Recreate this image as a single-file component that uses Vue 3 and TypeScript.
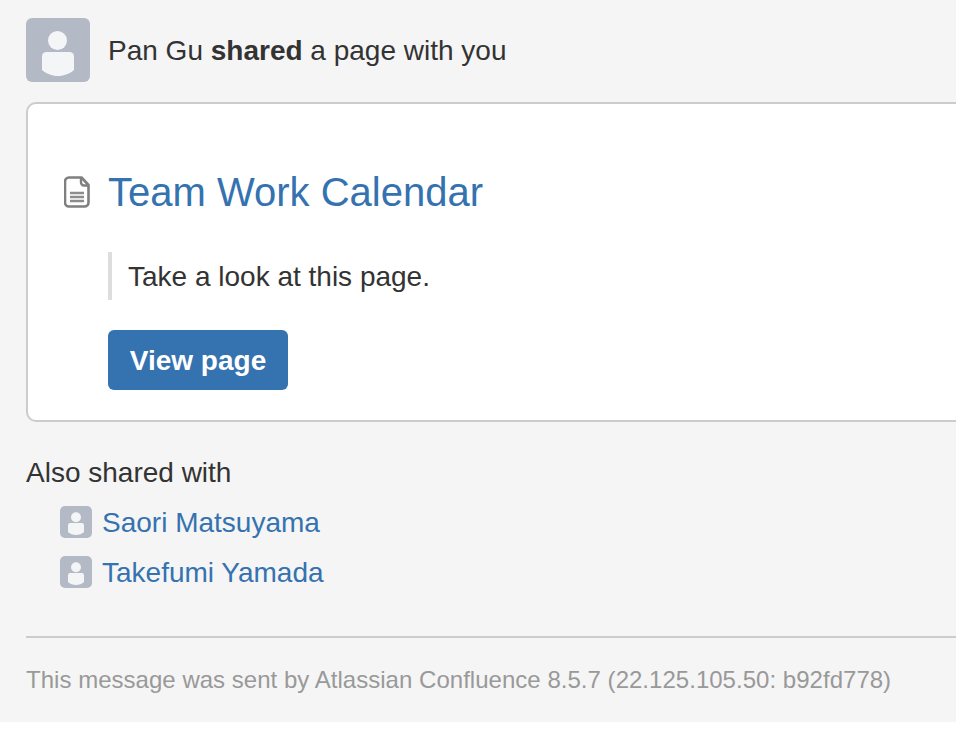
<script setup lang="ts">
const people: string[] = ['Saori Matsuyama', 'Takefumi Yamada']
</script>

<template>
  <div class="viewport">
    <main class="page">
      <header class="head">
        <svg class="avatar" viewBox="0 0 64 64" aria-hidden="true">
          <rect width="64" height="64" rx="6" fill="#b3bac5" />
          <circle cx="31.500" cy="22.500" r="9.500" fill="#f4f5f7" />
          <path d="M16 38.500a4.500 4.500 0 0 1 4.500-4.500h23a4.500 4.500 0 0 1 4.500 4.500v13.500c-4 3.500-10 6-16 6s-12-2.500-16-6z" fill="#f4f5f7" />
        </svg>
        <p class="head-text">Pan Gu <strong>shared</strong> a page with you</p>
      </header>

      <section class="card">
        <div class="title-row">
          <svg class="page-icon" viewBox="0 0 26 32" aria-hidden="true">
            <path d="M5 1.500h12.500l7 7.500V26.500a4 4 0 0 1-4 4H5a4 4 0 0 1-4-4V5.500a4 4 0 0 1 4-4z" fill="#fff" stroke="#7f7f7f" stroke-width="2.600" stroke-linejoin="round" />
            <path d="M17 2v4.500a3 3 0 0 0 3 3h4.500" fill="none" stroke="#7f7f7f" stroke-width="2.400" />
            <path d="M6 17h14M6 21h14M6 25h14" stroke="#8c8c8c" stroke-width="2.400" />
          </svg>
          <a class="title">Team Work Calendar</a>
        </div>
        <blockquote class="quote">Take a look at this page.</blockquote>
        <a class="button">View page</a>
      </section>

      <p class="also">Also shared with</p>
      <ul class="people">
        <li v-for="person in people" :key="person" class="person">
          <svg class="mini" viewBox="0 0 64 64" aria-hidden="true">
            <rect width="64" height="64" rx="10" fill="#b3bac5" />
            <circle cx="32" cy="22.500" r="10" fill="#f4f5f7" />
            <path d="M16 38.500a4.500 4.500 0 0 1 4.500-4.500h23a4.500 4.500 0 0 1 4.500 4.500v13.500c-4 3.500-10 6-16 6s-12-2.500-16-6z" fill="#f4f5f7" />
          </svg>
          <a class="person-name">{{ person }}</a>
        </li>
      </ul>

      <footer class="foot">This message was sent by Atlassian Confluence 8.5.7 (22.125.105.50: b92fd778)</footer>
    </main>
  </div>
</template>

<style>
html, body { margin: 0; background: #fff; overflow: hidden; }
</style>

<style scoped>
.viewport {
  width: 956px;
  height: 730px;
  overflow: hidden;
  background: #fff;
}
.page {
  box-sizing: border-box;
  width: 1010px;
  height: 722px;
  padding: 18px 0 0 26px;
  background: #f5f5f5;
  font-family: "Liberation Sans", Arial, sans-serif;
  color: #333;
}
.head {
  display: flex;
  align-items: center;
  gap: 18px;
  height: 64px;
}
.avatar {
  width: 64px;
  height: 64px;
  flex: none;
}
.head-text {
  margin: 0;
  padding-top: 2px;
  font-size: 28px;
  line-height: 62px;
}
.card {
  box-sizing: border-box;
  height: 320px;
  margin-top: 20px;
  padding: 62px 0 0 36px;
  background: #fff;
  border: 2px solid #ccc;
  border-radius: 10px;
}
.title-row {
  display: flex;
  align-items: center;
  gap: 18px;
  height: 52px;
}
.page-icon {
  width: 26px;
  height: 32px;
  flex: none;
}
.title {
  font-size: 40px;
  line-height: 52px;
  color: #3572b0;
}
.quote {
  box-sizing: border-box;
  height: 48px;
  margin: 34px 0 0 44px;
  padding: 1px 0 0 16px;
  border-left: 4px solid #ddd;
  font-size: 28px;
  line-height: 47px;
  color: #333;
}
.button {
  display: block;
  box-sizing: border-box;
  width: 180px;
  height: 60px;
  margin: 30px 0 0 44px;
  padding-top: 1px;
  background: #3572b0;
  border-radius: 6px;
  color: #fff;
  font-size: 28px;
  font-weight: 700;
  line-height: 59px;
  text-align: center;
}
.also {
  margin: 31px 0 0;
  font-size: 28px;
  line-height: 40px;
}
.people {
  margin: 4px 0 0;
  padding: 0 0 0 34px;
  list-style: none;
}
.person {
  display: flex;
  align-items: center;
  gap: 10px;
  height: 50px;
}
.mini {
  width: 32px;
  height: 32px;
  flex: none;
}
.person-name {
  padding-top: 2px;
  font-size: 28px;
  line-height: 40px;
  color: #3572b0;
}
.foot {
  margin-top: 39px;
  padding-top: 22px;
  border-top: 2px solid #ccc;
  font-size: 24px;
  letter-spacing: 0.025px;
  line-height: 40px;
  color: #999;
}
</style>
